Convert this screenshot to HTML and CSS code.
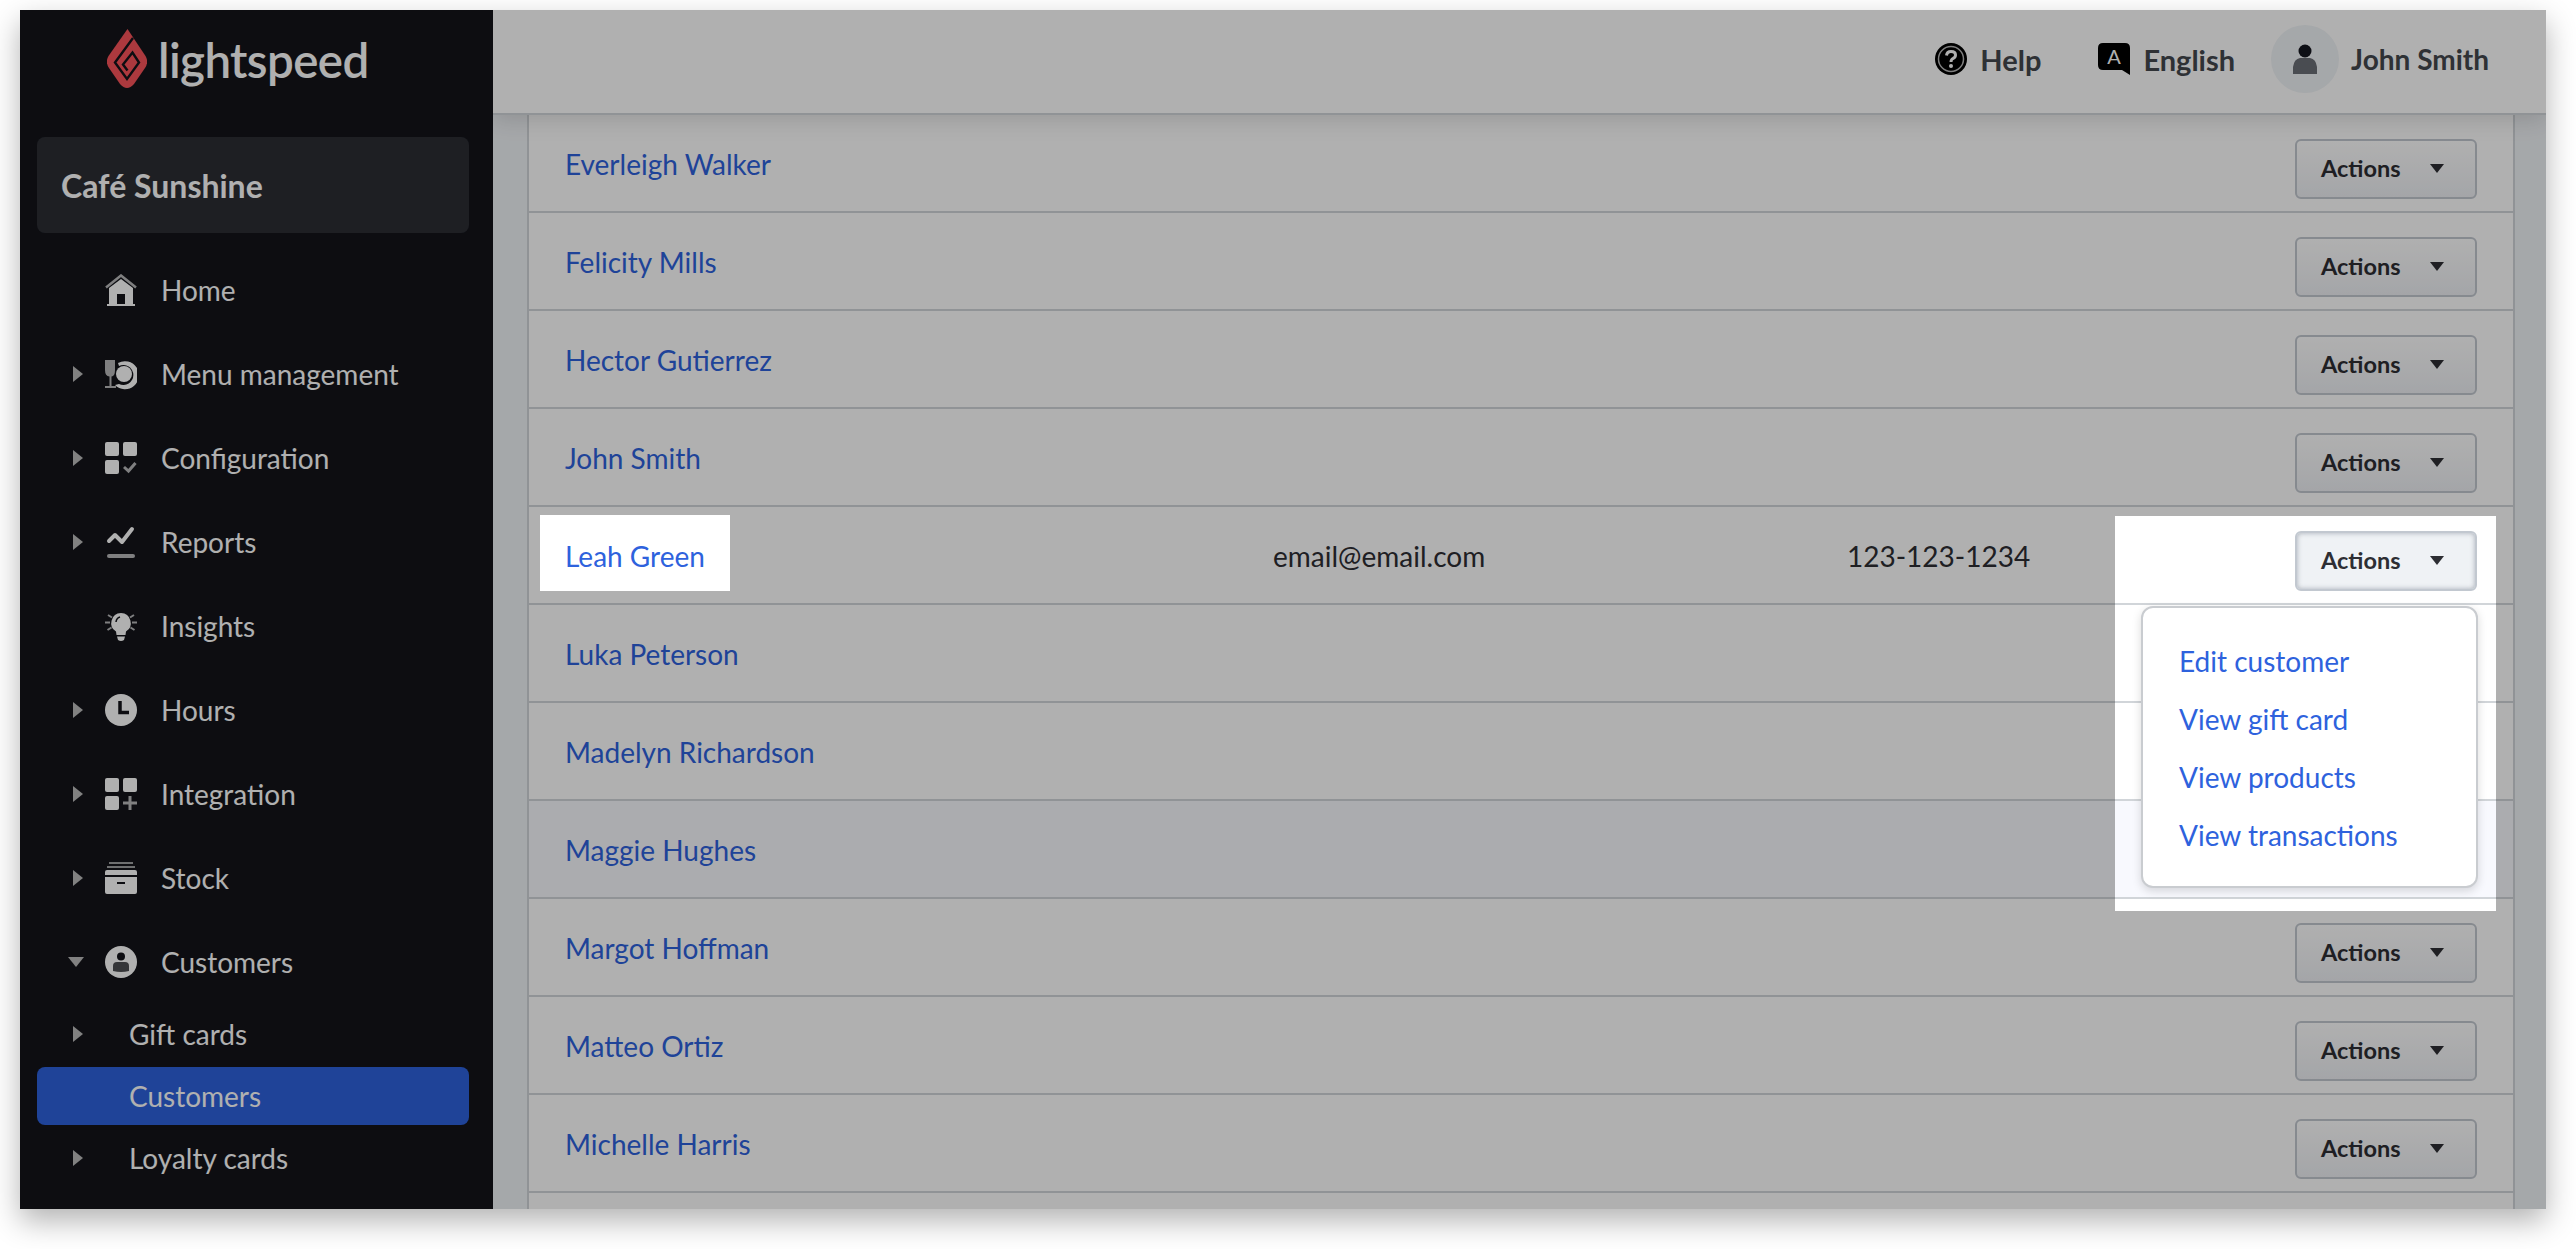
FILE: index.html

```html
<!DOCTYPE html>
<html lang="en">
<head>
  <meta charset="UTF-8">
  <title>Customers</title>
  <link rel="stylesheet" href="styles.css">
</head>
<body>
  <div class="window">
    <aside class="sidebar">
      <div class="logo">
        <svg class="logo-mark" viewBox="0 0 40 60">
          <path fill="#f9535a" d="M20.5 0L38.5 27Q42 33 38 39L27 55Q20 63 13 55L2 39Q-2 33 1.500 27Z"/>
          <path fill="none" stroke="#13141a" stroke-width="2.400" d="M26 9L8 33.500L20 50L32 33.500L25.500 23.500L16 35.500L20.500 41.500"/>
        </svg>
        <span class="logo-text">lightspeed</span>
      </div>
      <div class="store">Café Sunshine</div>
      <nav class="menu">
        <a class="menu-item">
          <svg class="icon" viewBox="0 0 32 32">
            <path fill="none" stroke="#fff" stroke-opacity=".7" stroke-width="2.500" d="M1 13.500L16 1.500L31 13.500"/>
            <path fill="#fff" d="M4 14L16 5L28 14V30H30V32H2V30H4ZM12 20V30H20V20Z"/>
          </svg>
          <span>Home</span>
        </a>
        <a class="menu-item has-sub">
          <svg class="icon" viewBox="0 0 32 32">
            <path fill="#fff" d="M13 5A14 14 0 1 1 10 27L14 26A10 10 0 1 0 14 8Z"/>
            <circle cx="19" cy="16" r="8" fill="#fff"/>
            <path fill="#fff" fill-opacity=".7" d="M0 2H10V12Q10 18 6.500 18.500V28H11V30H0V28H4.500V18.500Q0 18 0 12Z"/>
          </svg>
          <span>Menu management</span>
        </a>
        <a class="menu-item has-sub">
          <svg class="icon" viewBox="0 0 32 32">
            <rect width="14" height="14" rx="2" fill="#fff"/>
            <rect x="18" width="14" height="14" rx="2" fill="#fff"/>
            <rect y="18" width="14" height="14" rx="2" fill="#fff"/>
            <path fill="none" stroke="#fff" stroke-opacity=".7" stroke-width="3" d="M19 25L23.500 29L30.500 21"/>
          </svg>
          <span>Configuration</span>
        </a>
        <a class="menu-item has-sub">
          <svg class="icon" viewBox="0 0 32 32">
            <path fill="none" stroke="#fff" stroke-width="4" stroke-linecap="round" stroke-linejoin="round" d="M4 15L10 9L17 16L27 3"/>
            <rect x="2" y="28" width="28" height="4" rx="2" fill="#fff" fill-opacity=".7"/>
          </svg>
          <span>Reports</span>
        </a>
        <a class="menu-item">
          <svg class="icon" viewBox="0 0 32 32">
            <path fill="#fff" d="M16 3A10 10 0 0 1 21 21.500L20.500 25H11.500L11 21.500A10 10 0 0 1 16 3ZM12 26.500H20L19 30Q16 32 13 30Z"/>
            <path fill="none" stroke="#13141a" stroke-width="1.500" d="M11 12Q11.500 8 15 7"/>
            <path fill="none" stroke="#fff" stroke-opacity=".7" stroke-width="2" d="M3 5L7 7.500M29 5L25 7.500M0 12.500H5M32 12.500H27M2.500 20L6.500 17.500M29.500 20L25.500 17.500"/>
          </svg>
          <span>Insights</span>
        </a>
        <a class="menu-item has-sub">
          <svg class="icon" viewBox="0 0 32 32">
            <circle cx="16" cy="16" r="16" fill="#fff"/>
            <path fill="none" stroke="#13141a" stroke-width="3.500" d="M15 7V18.500H24"/>
          </svg>
          <span>Hours</span>
        </a>
        <a class="menu-item has-sub">
          <svg class="icon" viewBox="0 0 32 32">
            <rect width="14" height="14" rx="2" fill="#fff"/>
            <rect x="18" width="14" height="14" rx="2" fill="#fff"/>
            <rect y="18" width="14" height="14" rx="2" fill="#fff"/>
            <path fill="none" stroke="#fff" stroke-opacity=".7" stroke-width="3" d="M25 18V32M18 25H32"/>
          </svg>
          <span>Integration</span>
        </a>
        <a class="menu-item has-sub">
          <svg class="icon" viewBox="0 0 32 32">
            <path fill="none" stroke="#fff" stroke-opacity=".8" stroke-width="1.500" d="M4 1H28M2 5H30"/>
            <path fill="#fff" d="M2 8H30Q32 8 32 10V13H0V10Q0 8 2 8ZM0 15H32V30Q32 32 30 32H2Q0 32 0 30ZM12 20V22H20V20Z" fill-rule="evenodd"/>
          </svg>
          <span>Stock</span>
        </a>
        <a class="menu-item has-sub open">
          <svg class="icon" viewBox="0 0 32 32">
            <circle cx="16" cy="16" r="16" fill="#fff"/>
            <circle cx="16" cy="10.500" r="4" fill="#13141a"/>
            <path fill="#13141a" fill-opacity=".75" d="M8 25V20Q8 16 12 16H20Q24 16 24 20V25Q16 27 8 25Z"/>
          </svg>
          <span>Customers</span>
        </a>
      </nav>
      <div class="submenu">
        <a class="sub-item has-sub">Gift cards</a>
        <a class="sub-item active">Customers</a>
        <a class="sub-item has-sub">Loyalty cards</a>
      </div>
    </aside>

    <main class="main">
      <header class="topbar">
        <a class="top-link help-link">
          <svg class="top-icon" viewBox="0 0 32 32">
            <circle cx="16" cy="16" r="16" fill="#000"/>
            <circle cx="16" cy="16" r="12.500" fill="none" stroke="#b9b9b9" stroke-width="1.500"/>
            <path fill="none" stroke="#fff" stroke-width="3" d="M11.500 12.500Q12 8.500 16 8.500Q20.500 8.500 20.500 12Q20.500 14.500 18 15.500Q16 16.500 16 19"/>
            <circle cx="16" cy="23" r="2" fill="#fff"/>
          </svg>
          <span>Help</span>
        </a>
        <a class="top-link">
          <svg class="top-icon" viewBox="0 0 32 32">
            <path fill="#000" d="M5 0H27Q32 0 32 5V32L24 27H5Q0 27 0 22V5Q0 0 5 0Z"/>
            <text class="lang-letter" x="16" y="21" text-anchor="middle">A</text>
          </svg>
          <span>English</span>
        </a>
        <a class="user">
          <span class="avatar">
            <svg viewBox="0 0 24 30" class="avatar-icon">
              <circle cx="12" cy="7" r="6.500" fill="#14161f"/>
              <path fill="#6b6e76" d="M0 30V23Q1 15 7 14H17Q23 15 24 23V30Z"/>
            </svg>
          </span>
          <span>John Smith</span>
        </a>
      </header>

      <div class="content">
        <div class="customers">
          <div class="row"><a class="name">Everleigh Walker</a><button class="actions-btn">Actions<i class="caret"></i></button></div>
          <div class="row"><a class="name">Felicity Mills</a><button class="actions-btn">Actions<i class="caret"></i></button></div>
          <div class="row"><a class="name">Hector Gutierrez</a><button class="actions-btn">Actions<i class="caret"></i></button></div>
          <div class="row"><a class="name">John Smith</a><button class="actions-btn">Actions<i class="caret"></i></button></div>
          <div class="row">
            <a class="name">Leah Green</a>
            <span class="email">email@email.com</span>
            <span class="phone">123-123-1234</span>
            <div class="actions-wrap">
              <button class="actions-btn pressed">Actions<i class="caret"></i></button>
              <div class="dropdown">
                <a>Edit customer</a>
                <a>View gift card</a>
                <a>View products</a>
                <a>View transactions</a>
              </div>
            </div>
          </div>
          <div class="row"><a class="name">Luka Peterson</a></div>
          <div class="row"><a class="name">Madelyn Richardson</a></div>
          <div class="row hovered"><a class="name">Maggie Hughes</a></div>
          <div class="row"><a class="name">Margot Hoffman</a><button class="actions-btn">Actions<i class="caret"></i></button></div>
          <div class="row"><a class="name">Matteo Ortiz</a><button class="actions-btn">Actions<i class="caret"></i></button></div>
          <div class="row"><a class="name">Michelle Harris</a><button class="actions-btn">Actions<i class="caret"></i></button></div>
          <div class="row"></div>
        </div>
      </div>
    </main>

    <div class="dim"></div>
  </div>
</body>
</html>
```

FILE: styles.css

```css
:root {
  --link: #2e62dd;
  --line: #d1d5d9;
  --ink: #2d2e33;
}

* {
  box-sizing: border-box;
}

html, body {
  height: 100%;
}

body {
  margin: 0;
  padding: 10px 30px 40px 20px;
  background: #fff;
  font-family: Lato, "Noto Sans", sans-serif;
  overflow: hidden;
}

.window {
  position: relative;
  display: grid;
  grid-template-columns: 473px 1fr;
  height: 1199px;
  background: #f0f3f6;
  box-shadow: 0 12px 28px rgba(0,0,0,0.3);
}

/* grey layer with two holes, the highlighted parts stay bright */
.dim {
  position: absolute;
  inset: 0;
  background: rgba(0,0,0,0.31);
  clip-path: path(evenodd, "M0 0H2526V1199H0Z M520 505H710V581H520Z M2095 506H2476V901H2095Z");
  z-index: 5;
}

/* sidebar */
.sidebar {
  background: #13141a;
  color: #fff;
  padding: 19px 24px 0 17px;
  overflow: hidden;
}

.logo {
  display: flex;
  align-items: center;
  gap: 11px;
  height: 60px;
  padding-left: 70px;
}

.logo-mark {
  width: 40px;
  height: 60px;
  flex: none;
}

.logo-text {
  padding-top: 2px;
  font-size: 47.5px;
  font-weight: 600;
  letter-spacing: -0.6px;
  line-height: 60px;
}

.store {
  height: 96px;
  margin-top: 48px;
  padding-left: 24px;
  display: flex;
  align-items: center;
  background: #2c2d34;
  border-radius: 8px;
  font-size: 32px;
  font-weight: 700;
}

.menu {
  margin-top: 15px;
}

.menu-item {
  position: relative;
  display: flex;
  align-items: center;
  gap: 24px;
  height: 84px;
  padding-left: 68px;
  font-size: 28px;
}

.icon {
  width: 32px;
  height: 32px;
  flex: none;
}

.has-sub::before {
  content: "";
  position: absolute;
  left: 36px;
  top: 50%;
  margin-top: -8px;
  border-left: 10px solid #bbb;
  border-top: 8px solid transparent;
  border-bottom: 8px solid transparent;
}

.menu-item.open::before {
  left: 31px;
  margin-top: -5px;
  border-top: 10px solid #bbb;
  border-left: 8px solid transparent;
  border-right: 8px solid transparent;
  border-bottom: 0;
}

.submenu {
  margin-top: -1px;
}

.sub-item {
  position: relative;
  display: flex;
  align-items: center;
  height: 62px;
  padding-left: 92px;
  font-size: 28px;
}

.sub-item.active {
  height: 58px;
  margin: 2px 0;
  background: #2e62dd;
  border-radius: 8px;
}

/* top bar */
.main {
  display: flex;
  flex-direction: column;
  min-width: 0;
  overflow: hidden;
}

.topbar {
  position: relative;
  z-index: 2;
  flex: none;
  display: flex;
  align-items: center;
  justify-content: flex-end;
  gap: 36px;
  height: 105px;
  padding: 0 57px 5px 0;
  background: #fff;
  border-bottom: 2px solid var(--line);
  box-shadow: 0 4px 22px rgba(0,0,0,0.14);
  color: #43474e;
  font-size: 28px;
  font-weight: 700;
}

.top-link {
  display: flex;
  align-items: center;
  gap: 13px;
  font-size: 29px;
}

.help-link {
  margin-right: 21px;
}

.top-icon {
  width: 32px;
  height: 32px;
  flex: none;
}

.lang-letter {
  fill: #fff;
  font-family: Lato, sans-serif;
  font-size: 20px;
  font-weight: 400;
}

.user {
  display: flex;
  align-items: center;
  gap: 12px;
}

.avatar {
  width: 68px;
  height: 68px;
  border-radius: 50%;
  background: #f0f3f6;
  display: flex;
  align-items: center;
  justify-content: center;
}

.avatar-icon {
  width: 24px;
  height: 30px;
}

/* customer list */
.content {
  flex: 1;
  min-height: 0;
  padding: 0 31px 0 34px;
  overflow: hidden;
}

.customers {
  background: #fff;
  border-left: 2px solid var(--line);
  border-right: 2px solid var(--line);
}

.row {
  display: flex;
  align-items: center;
  height: 98px;
  padding: 0 36px;
  border-bottom: 2px solid var(--line);
  font-size: 28px;
  color: var(--ink);
}

.row.hovered {
  background: #f8f9fe;
}

.name {
  width: 708px;
  flex: none;
  color: var(--link);
  padding-top: 2px;
}

.email {
  width: 574px;
  flex: none;
  padding-top: 2px;
}

.phone {
  padding-top: 2px;
}

.actions-btn {
  display: flex;
  align-items: center;
  justify-content: space-between;
  width: 182px;
  height: 60px;
  margin: 12px 0 0 auto;
  padding: 0 31px 2px 24px;
  background: linear-gradient(#fff, #eef0f4);
  border: 2px solid #c2c8d0;
  border-radius: 6px;
  font-family: Lato, sans-serif;
  font-size: 23.5px;
  font-weight: 700;
  color: var(--ink);
}

.actions-btn.pressed {
  background: #eff2f5;
  box-shadow: inset 0 0 5px rgba(60,70,90,0.4);
}

.caret {
  width: 0;
  height: 0;
  border-top: 9px solid var(--ink);
  border-left: 7px solid transparent;
  border-right: 7px solid transparent;
}

.actions-wrap {
  position: relative;
  margin-left: auto;
}

.dropdown {
  position: absolute;
  top: 87px;
  right: -1px;
  width: 337px;
  height: 282px;
  padding: 24px 0 0 36px;
  background: #fff;
  border: 2px solid #c9ccd0;
  border-radius: 12px;
  box-shadow: 0 3px 10px rgba(0,0,0,0.15);
  z-index: 3;
}

.dropdown a {
  display: block;
  height: 58px;
  line-height: 58px;
  color: var(--link);
}
```
